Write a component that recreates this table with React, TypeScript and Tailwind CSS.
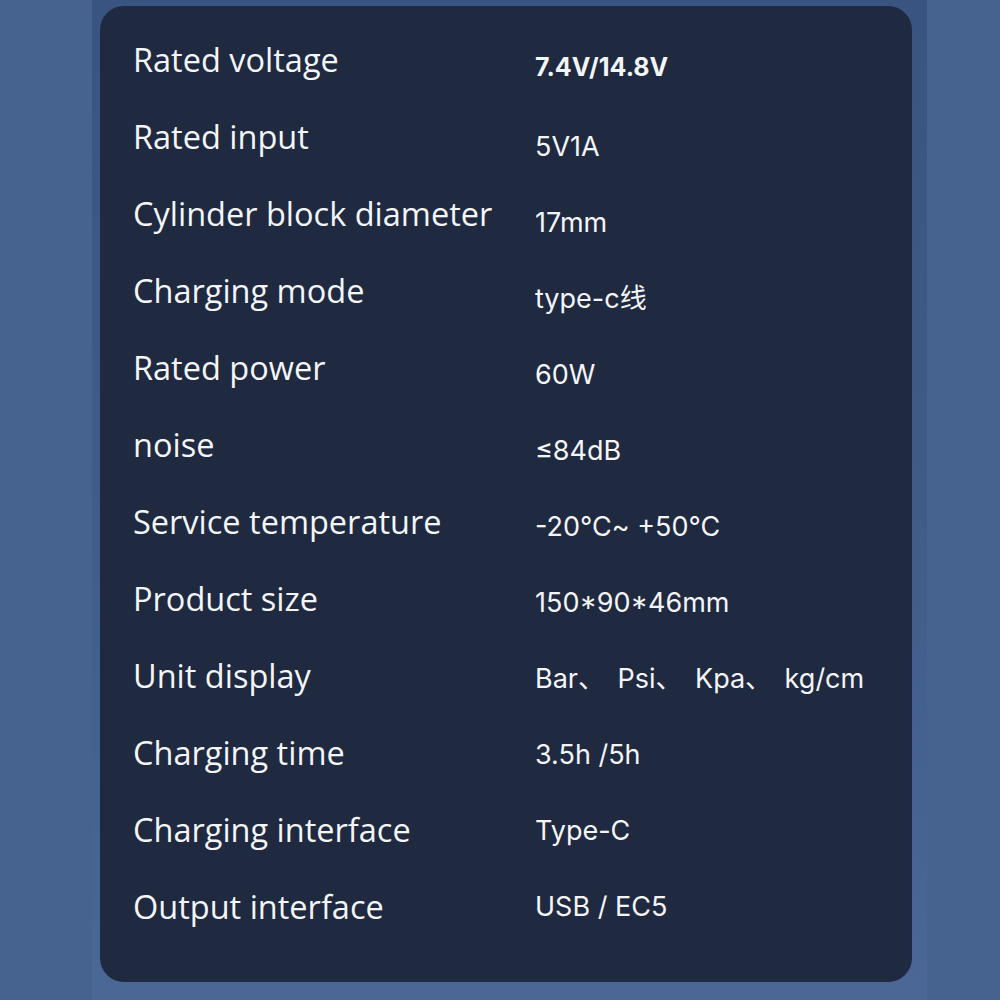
const specs: { label: string; value: string }[] = [
  { label: "Rated voltage", value: "7.4V/14.8V" },
  { label: "Rated input", value: "5V1A" },
  { label: "Cylinder block diameter", value: "17mm" },
  { label: "Charging mode", value: "type-c线" },
  { label: "Rated power", value: "60W" },
  { label: "noise", value: "≤84dB" },
  { label: "Service temperature", value: "-20℃~ +50℃" },
  { label: "Product size", value: "150*90*46mm" },
  { label: "Unit display", value: "Bar、 \u2009Psi、 \u2009Kpa、 \u2009kg/cm" },
  { label: "Charging time", value: "3.5h /5h" },
  { label: "Charging interface", value: "Type-C" },
  { label: "Output interface", value: "USB / EC5" },
];

export default function App() {
  return (
    <div className="w-[1000px] h-[1000px] bg-[#46628e] flex overflow-hidden">
      {/* darker backdrop strip behind the card */}
      <div className="ml-[92px] w-[835px] h-full pt-[6px] pl-[8px] bg-gradient-to-b from-[#3a5481] via-[#405b88] to-[#4b6796]">
        <div className="w-[812px] h-[976px] rounded-[24px] bg-[#1f2940] flex pl-[33px]">
          {/* labels */}
          <div className="w-[402px] pt-[15px] flex flex-col font-['Open_Sans',sans-serif] font-medium text-[32.5px] text-[#f4f5f7]">
            {specs.map((s) => (
              <div key={s.label} className="h-[77px] leading-[77px] whitespace-nowrap">
                {s.label}
              </div>
            ))}
          </div>

          {/* values */}
          <div className="pt-[19px] flex flex-col font-['Inter','Noto_Sans_CJK_SC',sans-serif] text-[27px] text-[#f4f5f7]">
            {specs.map((s, i) => (
              <div
                key={s.label}
                className={
                  i === 0
                    ? "h-[84px] leading-[84px] whitespace-pre font-bold text-[25px]"
                    : "h-[76px] leading-[76px] whitespace-pre"
                }
              >
                {s.value}
              </div>
            ))}
          </div>
        </div>
      </div>
    </div>
  );
}
